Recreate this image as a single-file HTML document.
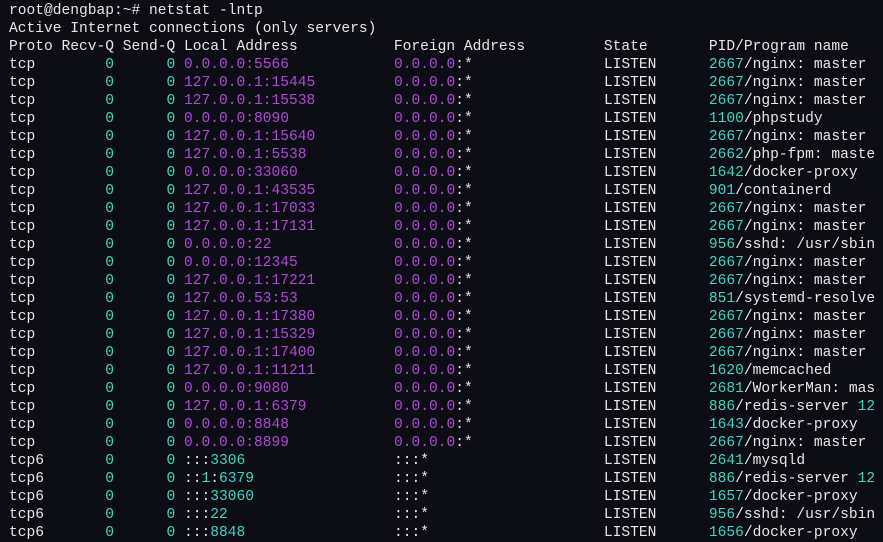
<!DOCTYPE html>
<html><head><meta charset="utf-8"><style>
html,body{margin:0;padding:0;background:#0c0c14;width:883px;height:542px;overflow:hidden}
pre{margin:0;padding:2px 0 0 9px;font-family:"Liberation Mono",monospace;font-size:14.58px;line-height:18px;color:#e6e6e6;white-space:pre}
.c{color:#3dd6c4}.p{color:#b048d6}
</style></head><body><pre>root@dengbap:~# netstat -lntp
Active Internet connections (only servers)
Proto Recv-Q Send-Q Local Address           Foreign Address         State       PID/Program name
tcp        <span class="c">0</span>      <span class="c">0</span> <span class="p">0.0.0.0:5566</span>            <span class="p">0.0.0.0</span>:*               LISTEN      <span class="c">2667</span>/nginx: master
tcp        <span class="c">0</span>      <span class="c">0</span> <span class="p">127.0.0.1:15445</span>         <span class="p">0.0.0.0</span>:*               LISTEN      <span class="c">2667</span>/nginx: master
tcp        <span class="c">0</span>      <span class="c">0</span> <span class="p">127.0.0.1:15538</span>         <span class="p">0.0.0.0</span>:*               LISTEN      <span class="c">2667</span>/nginx: master
tcp        <span class="c">0</span>      <span class="c">0</span> <span class="p">0.0.0.0:8090</span>            <span class="p">0.0.0.0</span>:*               LISTEN      <span class="c">1100</span>/phpstudy
tcp        <span class="c">0</span>      <span class="c">0</span> <span class="p">127.0.0.1:15640</span>         <span class="p">0.0.0.0</span>:*               LISTEN      <span class="c">2667</span>/nginx: master
tcp        <span class="c">0</span>      <span class="c">0</span> <span class="p">127.0.0.1:5538</span>          <span class="p">0.0.0.0</span>:*               LISTEN      <span class="c">2662</span>/php-fpm: maste
tcp        <span class="c">0</span>      <span class="c">0</span> <span class="p">0.0.0.0:33060</span>           <span class="p">0.0.0.0</span>:*               LISTEN      <span class="c">1642</span>/docker-proxy
tcp        <span class="c">0</span>      <span class="c">0</span> <span class="p">127.0.0.1:43535</span>         <span class="p">0.0.0.0</span>:*               LISTEN      <span class="c">901</span>/containerd
tcp        <span class="c">0</span>      <span class="c">0</span> <span class="p">127.0.0.1:17033</span>         <span class="p">0.0.0.0</span>:*               LISTEN      <span class="c">2667</span>/nginx: master
tcp        <span class="c">0</span>      <span class="c">0</span> <span class="p">127.0.0.1:17131</span>         <span class="p">0.0.0.0</span>:*               LISTEN      <span class="c">2667</span>/nginx: master
tcp        <span class="c">0</span>      <span class="c">0</span> <span class="p">0.0.0.0:22</span>              <span class="p">0.0.0.0</span>:*               LISTEN      <span class="c">956</span>/sshd: /usr/sbin
tcp        <span class="c">0</span>      <span class="c">0</span> <span class="p">0.0.0.0:12345</span>           <span class="p">0.0.0.0</span>:*               LISTEN      <span class="c">2667</span>/nginx: master
tcp        <span class="c">0</span>      <span class="c">0</span> <span class="p">127.0.0.1:17221</span>         <span class="p">0.0.0.0</span>:*               LISTEN      <span class="c">2667</span>/nginx: master
tcp        <span class="c">0</span>      <span class="c">0</span> <span class="p">127.0.0.53:53</span>           <span class="p">0.0.0.0</span>:*               LISTEN      <span class="c">851</span>/systemd-resolve
tcp        <span class="c">0</span>      <span class="c">0</span> <span class="p">127.0.0.1:17380</span>         <span class="p">0.0.0.0</span>:*               LISTEN      <span class="c">2667</span>/nginx: master
tcp        <span class="c">0</span>      <span class="c">0</span> <span class="p">127.0.0.1:15329</span>         <span class="p">0.0.0.0</span>:*               LISTEN      <span class="c">2667</span>/nginx: master
tcp        <span class="c">0</span>      <span class="c">0</span> <span class="p">127.0.0.1:17400</span>         <span class="p">0.0.0.0</span>:*               LISTEN      <span class="c">2667</span>/nginx: master
tcp        <span class="c">0</span>      <span class="c">0</span> <span class="p">127.0.0.1:11211</span>         <span class="p">0.0.0.0</span>:*               LISTEN      <span class="c">1620</span>/memcached
tcp        <span class="c">0</span>      <span class="c">0</span> <span class="p">0.0.0.0:9080</span>            <span class="p">0.0.0.0</span>:*               LISTEN      <span class="c">2681</span>/WorkerMan: mas
tcp        <span class="c">0</span>      <span class="c">0</span> <span class="p">127.0.0.1:6379</span>          <span class="p">0.0.0.0</span>:*               LISTEN      <span class="c">886</span>/redis-server <span class="c">12</span>
tcp        <span class="c">0</span>      <span class="c">0</span> <span class="p">0.0.0.0:8848</span>            <span class="p">0.0.0.0</span>:*               LISTEN      <span class="c">1643</span>/docker-proxy
tcp        <span class="c">0</span>      <span class="c">0</span> <span class="p">0.0.0.0:8899</span>            <span class="p">0.0.0.0</span>:*               LISTEN      <span class="c">2667</span>/nginx: master
tcp6       <span class="c">0</span>      <span class="c">0</span> :::<span class="c">3306</span>                 :::*                    LISTEN      <span class="c">2641</span>/mysqld
tcp6       <span class="c">0</span>      <span class="c">0</span> ::<span class="c">1</span>:<span class="c">6379</span>                :::*                    LISTEN      <span class="c">886</span>/redis-server <span class="c">12</span>
tcp6       <span class="c">0</span>      <span class="c">0</span> :::<span class="c">33060</span>                :::*                    LISTEN      <span class="c">1657</span>/docker-proxy
tcp6       <span class="c">0</span>      <span class="c">0</span> :::<span class="c">22</span>                   :::*                    LISTEN      <span class="c">956</span>/sshd: /usr/sbin
tcp6       <span class="c">0</span>      <span class="c">0</span> :::<span class="c">8848</span>                 :::*                    LISTEN      <span class="c">1656</span>/docker-proxy
</pre></body></html>
